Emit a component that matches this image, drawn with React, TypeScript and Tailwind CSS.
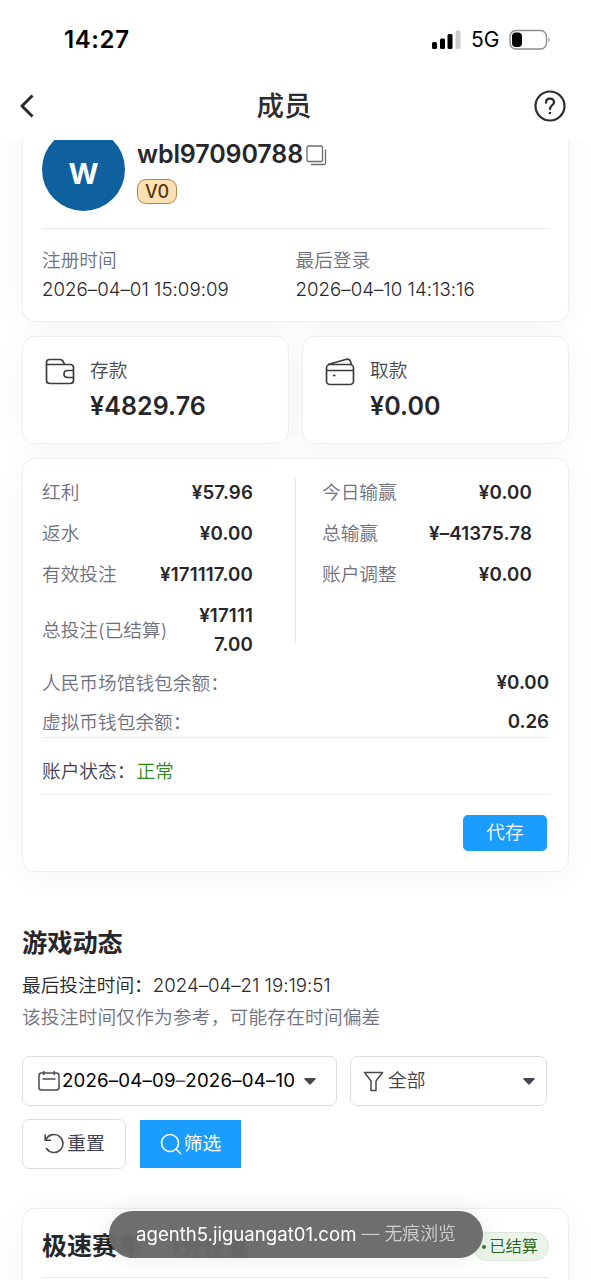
import type { ReactNode } from "react";

const LEFT_STATS = [
  { label: "红利", value: "¥57.96" },
  { label: "返水", value: "¥0.00" },
  { label: "有效投注", value: "¥171117.00" },
  { label: "总投注(已结算)", value: "¥171117.00" },
];

const RIGHT_STATS = [
  { label: "今日输赢", value: "¥0.00" },
  { label: "总输赢", value: "¥–41375.78" },
  { label: "账户调整", value: "¥0.00" },
];

const WALLETS = [
  { label: "人民币场馆钱包余额：", value: "¥0.00" },
  { label: "虚拟币钱包余额：", value: "0.26" },
];

function StatusBar() {
  return (
    <div className="flex h-[72px] items-center justify-between pt-2 pr-10 pl-16 text-black">
      <span className="text-[24px] font-semibold tracking-[0.6px]">14:27</span>
      <div className="flex items-center">
        <svg width="30" height="20" viewBox="0 0 30 20">
          <rect x="0" y="12" width="5" height="7" rx="1.5" fill="#000" />
          <rect x="8" y="8.500" width="5" height="10.500" rx="1.500" fill="#000" />
          <rect x="15.500" y="4" width="5" height="15" rx="1.500" fill="#000" />
          <rect x="23.500" y="0.500" width="5" height="18.500" rx="1.500" fill="#ccc" />
        </svg>
        <span className="ml-[9px] w-[29px] text-[21px] tracking-[-0.1px]">5G</span>
        <svg className="ml-[9px]" width="42" height="22" viewBox="0 0 42 22">
          <rect x="1" y="1.500" width="36.500" height="18.500" rx="6" fill="none" stroke="#8e8e8e" strokeWidth="1.400" />
          <rect x="3" y="3.500" width="10" height="14.500" rx="4" fill="#000" />
          <path d="M39.500 8 Q42 10.700 39.500 13.500 Z" fill="#8e8e8e" />
        </svg>
      </div>
    </div>
  );
}

function Header() {
  return (
    <header className="flex h-[68px] items-center justify-between pr-6 pl-[19px]">
      <svg width="16" height="26" viewBox="0 0 16 26" fill="none" stroke="#2c2c30" strokeWidth="3">
        <path d="M13.500 2.500 L3 13 L13.500 23.500" strokeLinejoin="round" />
      </svg>
      <h1 className="text-[27.500px] leading-[36px] font-medium text-[#2c2c30]">成员</h1>
      <svg width="34" height="34" viewBox="0 0 34 34" fill="none" stroke="#2c2c30" strokeWidth="2.200" strokeLinecap="round">
        <circle cx="17" cy="17" r="14.500" />
        <path d="M13 13.700 C13 11 14.700 9.700 17 9.700 C19.400 9.700 21 11.300 21 13.400 C21 15.800 17 16.400 17 20" />
        <circle cx="17" cy="24" r="0.600" fill="#2c2c30" strokeWidth="1.400" />
      </svg>
    </header>
  );
}

function Card({ className, children }: { className: string; children: ReactNode }) {
  return (
    <section className={`rounded-[13px] border border-[#efeff0] bg-white shadow-[0_4px_30px_rgba(0,0,0,0.045)] ${className}`}>
      {children}
    </section>
  );
}

function DateItem({ label, value }: { label: string; value: string }) {
  return (
    <div className="flex-1 leading-[29px]">
      <div className="font-[350] text-[#6f7180]">{label}</div>
      <div className="font-[350] tracking-[0.02px]">{value}</div>
    </div>
  );
}

function StatRow({ label, value }: { label: string; value: string }) {
  return (
    <div className="flex items-center justify-between py-1.5 leading-[29px]">
      <span className="font-[350] whitespace-nowrap text-[#6f7180]">{label}</span>
      <span className="ml-7 text-right font-semibold tracking-[0.15px] break-all">{value}</span>
    </div>
  );
}

function MoneyCard({ icon, label, value }: { icon: ReactNode; label: string; value: string }) {
  return (
    <Card className="flex h-[108px] flex-1 gap-[15px] pt-[19px] pl-[22px]">
      {icon}
      <div>
        <div className="leading-[30px] font-[350] text-[#45464f]">{label}</div>
        <div className="text-[25px] leading-[41px] font-semibold tracking-[0.1px]">{value}</div>
      </div>
    </Card>
  );
}

const WalletIcon = (
  <svg className="mt-[2px]" width="30" height="28" viewBox="0 0 30 28" fill="none" stroke="#3c3c40" strokeWidth="1.700" strokeLinejoin="round">
    <path d="M1.500 6.500 V4.500 Q1.500 1.500 4.500 1.500 H15 Q17 1.500 18.200 3.500 L19.500 6.500" />
    <path d="M1.500 6.500 H25 Q28.500 6.500 28.500 9.500 V22.500 Q28.500 25.500 25 25.500 H5 Q1.500 25.500 1.500 22.500 Z" />
    <path d="M28.500 12.500 H23 Q19 12.500 19 16 Q19 19.500 23 19.500 H28.500" />
  </svg>
);

const CardIcon = (
  <svg className="mt-[2px]" width="30" height="28" viewBox="0 0 30 28" fill="none" stroke="#3c3c40" strokeWidth="1.700" strokeLinejoin="round">
    <path d="M3 6.500 L21.500 1.300 Q24 0.700 25 2.500 L26.500 6.500" />
    <rect x="1.500" y="6.500" width="27" height="20" rx="3.500" />
    <path d="M1.500 12.500 H28.500 M8 17.500 H10.500" />
  </svg>
);

function Caret() {
  return (
    <svg width="12" height="7" viewBox="0 0 12 7" fill="#454650">
      <path d="M1 0 H11 Q12 0.300 11.500 1.200 L6.800 6.300 Q6 7 5.200 6.300 L0.500 1.200 Q0 0.300 1 0 Z" />
    </svg>
  );
}

function GameActivity() {
  return (
    <section className="mt-[53px]">
      <h2 className="text-[25.200px] leading-9 font-bold">游戏动态</h2>
      <p className="mt-[9px] leading-8 font-[350]">
        最后投注时间：<span className="tracking-[-0.02px]">2024–04–21 19:19:51</span>
      </p>
      <p className="leading-8 font-[350] tracking-[0.18px] text-[#6f7180]">该投注时间仅作为参考，可能存在时间偏差</p>

      <div className="mt-[22px] flex gap-[13px]">
        <button className="flex h-[50px] w-[315px] items-center rounded-[7px] border border-[#dedee2] pl-[15px] tracking-[0.17px] text-black">
          <svg className="mr-[2px] shrink-0" width="22" height="22" viewBox="0 0 22 22" fill="none" stroke="#4a4a50" strokeWidth="1.500">
            <rect x="1" y="3" width="20" height="17" rx="2.500" />
            <path d="M5.700 1 V5 M16.300 1 V5 M4.500 9 H17.500" />
          </svg>
          2026–04–09<span className="text-[#555]">–</span>2026–04–10
          <span className="ml-[9px]"><Caret /></span>
        </button>
        <button className="flex h-[50px] w-[197px] items-center rounded-[7px] border border-[#dedee2] pr-[11px] pl-3 text-[#3f4050]">
          <svg className="mr-[4px]" width="21" height="21" viewBox="0 0 21 21" fill="none" stroke="#4a4a50" strokeWidth="1.500" strokeLinejoin="round">
            <path d="M1.500 1.500 H19.500 L13 10 V19.500 H8 V10 Z" />
          </svg>
          <span className="font-[350]">全部</span>
          <span className="ml-auto"><Caret /></span>
        </button>
      </div>

      <div className="mt-[13px] flex items-center gap-[14px]">
        <button className="flex h-[50px] w-[104px] items-center justify-center rounded-[7px] border border-[#dedee2] text-[#3f4050]">
          <svg className="mr-[2px]" width="22" height="22" viewBox="0 0 22 22" fill="none" stroke="#4a4a50" strokeWidth="1.600" strokeLinecap="round">
            <path d="M2.700 7 A9 9 0 1 1 3.500 15.500" />
            <path d="M2.200 2 V7.300 H7.500" />
          </svg>
          重置
        </button>
        <button className="flex h-12 w-[101px] items-center justify-center bg-[#1b9cff] text-white">
          <svg className="mr-[2px]" width="22" height="22" viewBox="0 0 22 22" fill="none" stroke="#fff" strokeWidth="1.600" strokeLinecap="round">
            <circle cx="10" cy="10" r="8.500" />
            <path d="M16 16 L20.500 20.500" />
          </svg>
          筛选
        </button>
      </div>
    </section>
  );
}

export default function App() {
  return (
    <div className="relative h-[1280px] w-[591px] overflow-hidden bg-white font-['Inter','Noto_Sans_CJK_SC',sans-serif] text-[18.7px] text-[#27272b]">
      <StatusBar />
      <Header />

      <main className="h-[1140px] overflow-hidden px-[22px]">
        {/* Profile card, scrolled partly under the header */}
        <Card className="-mt-8 h-[214px] p-[19px]">
          <div className="flex h-[83px]">
            <div className="flex size-[83px] items-center justify-center rounded-full bg-[#0e609e] pt-2 text-[29px] font-bold text-white">
              W
            </div>
            <div className="ml-3 pt-[9px]">
              <div className="flex h-9 items-center text-[25px] font-semibold tracking-[-0.1px]">
                wbl97090788
                <svg className="ml-[3px]" width="21" height="21" viewBox="0 0 21 21" fill="none" stroke="#6b6b72" strokeWidth="1.300">
                  <rect x="1" y="1" width="15.500" height="15.500" rx="1.500" />
                  <path d="M19.500 4.500 V18 Q19.500 19.500 18 19.500 H5" />
                </svg>
              </div>
              <div className="mt-[6px] flex h-[25px] w-10 items-center justify-center rounded-[9px] border border-[#b18a4a] bg-[#fde0b3] text-[18px] font-medium text-[#4f3a10]">
                V0
              </div>
            </div>
          </div>
          <div className="mt-[17px] flex border-t border-[#ececee] pt-[17px]">
            <DateItem label="注册时间" value="2026–04–01 15:09:09" />
            <DateItem label="最后登录" value="2026–04–10 14:13:16" />
          </div>
        </Card>

        <div className="mt-[14px] flex gap-[13px]">
          <MoneyCard icon={WalletIcon} label="存款" value="¥4829.76" />
          <MoneyCard icon={CardIcon} label="取款" value="¥0.00" />
        </div>

        <Card className="mt-[14px] h-[414px] px-[19px] pt-[13px]">
          <div className="flex h-[191px]">
            <div className="w-[211px]">
              {LEFT_STATS.map((s) => (
                <StatRow key={s.label} {...s} />
              ))}
            </div>
            <div className="mt-[6px] ml-[42px] h-[165px] w-px bg-[#e6e6e8]" />
            <div className="ml-[26px] w-[210px]">
              {RIGHT_STATS.map((s) => (
                <StatRow key={s.label} {...s} />
              ))}
            </div>
          </div>
          <div className="h-[75px] border-b border-[#ececee]">
            {WALLETS.map((w) => (
              <div key={w.label} className="flex h-[39px] items-center justify-between leading-[29px]">
                <span className="pt-px font-[350] text-[#6f7180]">{w.label}</span>
                <span className="pb-px font-semibold">{w.value}</span>
              </div>
            ))}
          </div>
          <div className="flex h-[57px] items-center border-b border-[#ececee] pt-3 font-[350] text-[#3f4050]">
            账户状态：<span className="pl-px text-[#2c8a1c]">正常</span>
          </div>
          <button className="mt-5 mr-0.5 ml-auto block h-9 w-[84px] rounded-[5px] bg-[#1b9cff] font-[350] text-white">
            代存
          </button>
        </Card>

        <GameActivity />

        <Card className="mt-[39px] h-[140px] px-[19px]">
          <div className="flex h-[69px] items-center justify-between border-b border-[#e8e8ea] pt-[7px]">
            <h3 className="text-[25px] font-bold">
              极速赛车<span className="ml-7 text-[23px]">1分任重</span>
            </h3>
            <span className="flex h-[29px] items-center rounded-full border border-[#dce6da] bg-[#eaf4e8] pr-[10px] pl-2 text-[16.300px] font-[350] text-[#23661c]">
              <span className="mr-[3px] size-1 rounded-full bg-[#2f7a28]" />
              已结算
            </span>
          </div>
        </Card>
      </main>

      {/* Floating browser address pill */}
      <div className="absolute top-[1211px] left-[109px] flex h-[47px] w-[374px] items-center justify-center rounded-full bg-[#666]/95 text-[18.600px] whitespace-pre text-white shadow-[0_0_24px_rgba(0,0,0,0.08)] backdrop-blur-[2px]">
        agenth5.jiguangat01.com<span className="text-[17.900px] font-[350] text-[#d0d0d0]"> — 无痕浏览</span>
      </div>
    </div>
  );
}
